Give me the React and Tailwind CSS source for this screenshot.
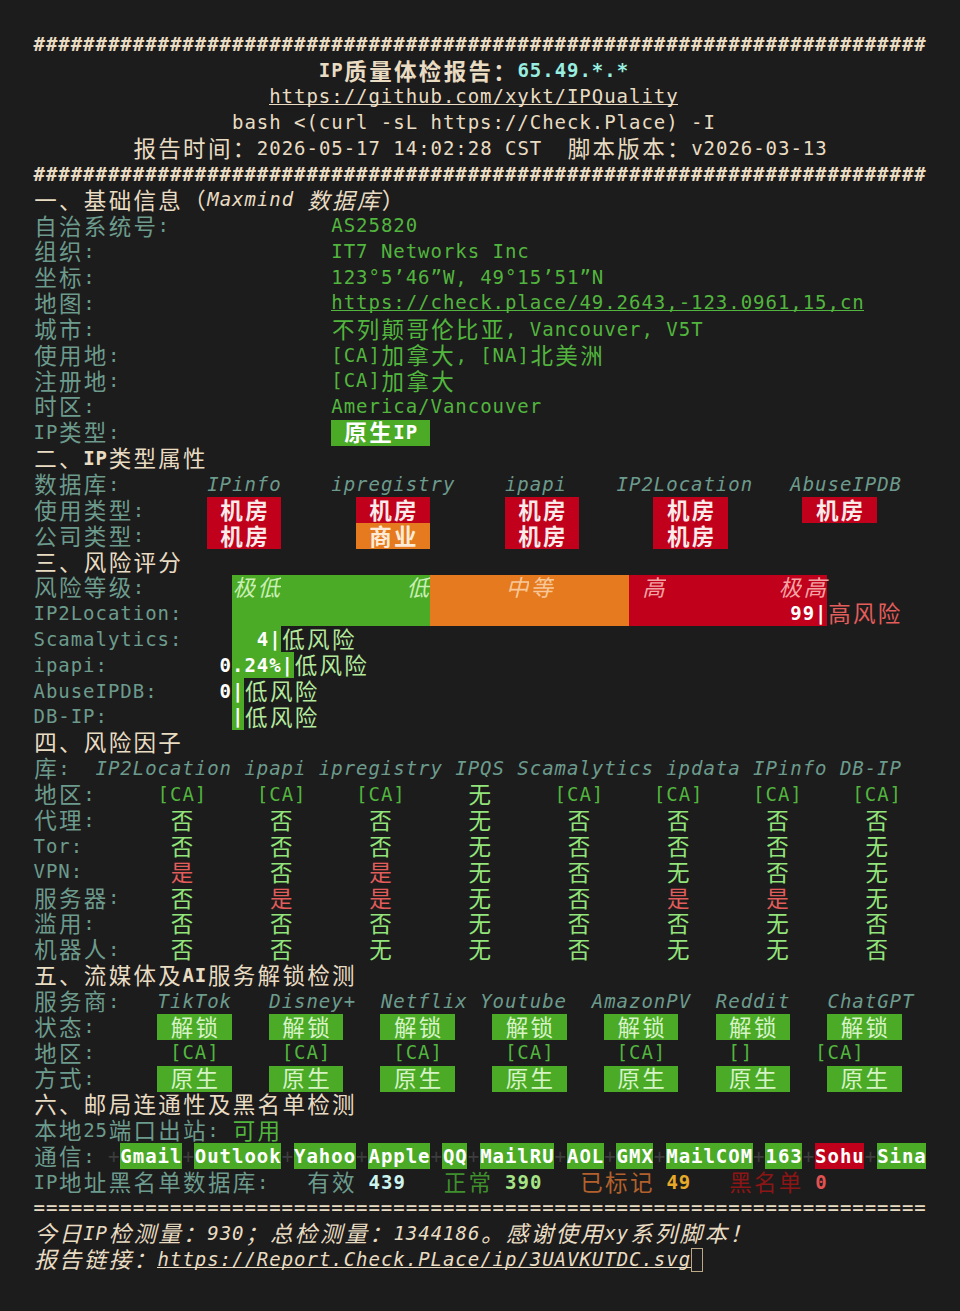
const CR = "text-[#e9dcc3]";
const LB = "text-[#6c9b8d]";
const GN = "text-[#52b53e]";
const LG = "text-[#93e47b]";
const RD = "text-[#e35d5b]";
const LOW = "text-[#b4e99c]";
const GB = "bg-[#4baa26] text-[#d6f3c6]";
const GBW = "bg-[#4baa26] text-white font-bold";
const RB = "bg-[#c1001b] text-[#fbeaea] font-bold";
const OB = "bg-[#e57a1f] text-[#fdebd8] font-bold";
const SEP = "text-[#3d3d3d]";

const NARROW =
  "flex h-full w-[12.42px] shrink-0 items-center justify-center whitespace-pre leading-none font-['DejaVu_Sans_Mono','Noto_Sans_CJK_SC',monospace] text-[19px]";
const WIDE =
  "flex h-full w-[24.84px] shrink-0 items-center justify-center whitespace-pre leading-none pb-[2px] font-['Noto_Sans_CJK_SC',sans-serif] text-[22.5px]";

const isWide = (ch) => {
  const c = ch.codePointAt(0);
  return (
    (c >= 0x2e80 && c <= 0xa4cf) ||
    (c >= 0xac00 && c <= 0xd7a3) ||
    (c >= 0xf900 && c <= 0xfaff) ||
    (c >= 0xfe30 && c <= 0xfe4f) ||
    (c >= 0xff00 && c <= 0xff60) ||
    (c >= 0xffe0 && c <= 0xffe6)
  );
};

const s = (t, c = "", col, u) => ({ t, c, col, u });

const Line = ({ segs, cursor }) => {
  const cells = [];
  let col = 0;
  segs.forEach((sg) => {
    if (sg.col != null) {
      while (col < sg.col) {
        cells.push({ ch: " ", w: 1, c: "" });
        col++;
      }
    }
    for (const ch of sg.t) {
      const w = isWide(ch) ? 2 : 1;
      cells.push({ ch, w, c: sg.c, u: sg.u });
      col += w;
    }
  });
  return (
    <div className="flex h-[25.85px]">
      {cells.map((x, i) => (
        <span key={i} className={`${x.w === 2 ? WIDE : NARROW} ${x.c}`}>
          {x.u ? (
            <span className="block w-full border-b-[1.5px] border-current text-center leading-[15px]">{x.ch}</span>
          ) : (
            x.ch
          )}
        </span>
      ))}
      {cursor && (
        <span className="flex h-full w-[12.42px] shrink-0 items-center">
          <span className="block h-[24px] w-[12px] border-[1.5px] border-[#bba985]" />
        </span>
      )}
    </div>
  );
};

const dbCols = [10, 18, 26, 34, 42, 50, 58, 66];
const factors = [
  ["代理:", "否否否无否否否否"],
  ["Tor:", "否否否无否否否无"],
  ["VPN:", "是否是无否无否无"],
  ["服务器:", "否是是无否是是无"],
  ["滥用:", "否否否无否否无否"],
  ["机器人:", "否否无无否无无否"],
];

const svcCols = [10, 19, 28, 37, 46, 55, 64];
const mails = ["Gmail", "Outlook", "Yahoo", "Apple", "QQ", "MailRU", "AOL", "GMX", "MailCOM", "163", "Sohu", "Sina"];

const lines = [
  [s("#".repeat(72), `${CR} font-bold`)],
  [s("IP质量体检报告：", `${CR} font-bold`, 23), s("65.49.*.*", "text-[#98efe0] font-bold")],
  [s("https://github.com/xykt/IPQuality", CR, 19, true)],
  [s("bash <(curl -sL https://Check.Place) -I", CR, 16)],
  [s("报告时间：2026-05-17 14:02:28 CST  脚本版本：v2026-03-13", CR, 8)],
  [s("#".repeat(72), `${CR} font-bold`)],
  [s("一、基础信息（", CR), s("Maxmind 数据库", `${CR} italic`), s("）", CR)],
  [s("自治系统号:", LB), s("AS25820", GN, 24)],
  [s("组织:", LB), s("IT7 Networks Inc", GN, 24)],
  [s("坐标:", LB), s("123°5’46”W, 49°15’51”N", GN, 24)],
  [s("地图:", LB), s("https://check.place/49.2643,-123.0961,15,cn", GN, 24, true)],
  [s("城市:", LB), s("不列颠哥伦比亚, Vancouver, V5T", GN, 24)],
  [s("使用地:", LB), s("[CA]加拿大, [NA]北美洲", GN, 24)],
  [s("注册地:", LB), s("[CA]加拿大", GN, 24)],
  [s("时区:", LB), s("America/Vancouver", GN, 24)],
  [s("IP类型:", LB), s(" 原生IP ", GBW, 24)],
  [s("二、", CR), s("IP", `${CR} font-bold`), s("类型属性", CR)],
  [
    s("数据库:", LB),
    s("IPinfo", `${LB} italic`, 14),
    s("ipregistry", `${LB} italic`, 24),
    s("ipapi", `${LB} italic`, 38),
    s("IP2Location", `${LB} italic`, 47),
    s("AbuseIPDB", `${LB} italic`, 61),
  ],
  [s("使用类型:", LB), s(" 机房 ", RB, 14), s(" 机房 ", RB, 26), s(" 机房 ", RB, 38), s(" 机房 ", RB, 50), s(" 机房 ", RB, 62)],
  [s("公司类型:", LB), s(" 机房 ", RB, 14), s(" 商业 ", OB, 26), s(" 机房 ", RB, 38), s(" 机房 ", RB, 50)],
  [s("三、风险评分", CR)],
  [
    s("风险等级:", LB),
    s("极低          低", "bg-[#4baa26] text-[#c9efb3] italic", 16),
    s("      中等      ", "bg-[#e57a1f] text-[#f8c898] italic"),
    s(" 高         极高", "bg-[#c1001b] text-[#f2a3a3] italic"),
  ],
  [
    s("IP2Location:", LB),
    s(" ".repeat(16), "bg-[#4baa26]", 16),
    s(" ".repeat(16), "bg-[#e57a1f]"),
    s(" ".repeat(13), "bg-[#c1001b]"),
    s("99|", "bg-[#c1001b] text-white font-bold"),
    s("高风险", RD),
  ],
  [s("Scamalytics:", LB), s("  4|", "bg-[#4baa26] text-white font-bold", 16), s("低风险", LOW)],
  [s("ipapi:", LB), s("0", "text-white font-bold", 15), s(".24%|", "bg-[#4baa26] text-white font-bold"), s("低风险", LOW)],
  [s("AbuseIPDB:", LB), s("0", "text-white font-bold", 15), s("|", "bg-[#4baa26] text-white font-bold"), s("低风险", LOW)],
  [s("DB-IP:", LB), s("|", "bg-[#4baa26] text-white font-bold", 16), s("低风险", LOW)],
  [s("四、风险因子", CR)],
  [s("库:", LB), s("IP2Location ipapi ipregistry IPQS Scamalytics ipdata IPinfo DB-IP", `${LB} italic`, 5)],
  [
    s("地区:", LB),
    ...["[CA]", "[CA]", "[CA]", "无", "[CA]", "[CA]", "[CA]", "[CA]"].map((v, i) =>
      v === "无" ? s(v, LG, dbCols[i] + 1) : s(v, GN, dbCols[i])
    ),
  ],
  ...factors.map(([label, vals]) => [
    s(label, LB),
    ...[...vals].map((v, i) => s(v, v === "是" ? RD : LG, dbCols[i] + 1)),
  ]),
  [s("五、流媒体及", CR), s("AI", `${CR} font-bold`), s("服务解锁检测", CR)],
  [
    s("服务商:", LB),
    s("TikTok", `${LB} italic`, 10),
    s("Disney+", `${LB} italic`, 19),
    s("Netflix", `${LB} italic`, 28),
    s("Youtube", `${LB} italic`, 36),
    s("AmazonPV", `${LB} italic`, 45),
    s("Reddit", `${LB} italic`, 55),
    s("ChatGPT", `${LB} italic`, 64),
  ],
  [s("状态:", LB), ...svcCols.map((c) => s(" 解锁 ", GB, c))],
  [
    s("地区:", LB),
    s("[CA]", GN, 11),
    s("[CA]", GN, 20),
    s("[CA]", GN, 29),
    s("[CA]", GN, 38),
    s("[CA]", GN, 47),
    s("[]", GN, 56),
    s("[CA]", GN, 63),
  ],
  [s("方式:", LB), ...svcCols.map((c) => s(" 原生 ", GB, c))],
  [s("六、邮局连通性及黑名单检测", CR)],
  [s("本地25端口出站:", LB), s("可用", GN, 16)],
  [
    s("通信:", LB),
    s("", "", 6),
    ...mails.flatMap((m) => [
      s("+", SEP),
      s(m, m === "Sohu" ? "bg-[#c1001b] text-white font-bold" : "bg-[#4baa26] text-white font-bold"),
    ]),
  ],
  [
    s("IP地址黑名单数据库:", LB),
    s("有效", LB, 22),
    s("439", "text-[#cdf4ee] font-bold", 27),
    s("正常", "text-[#3f8f2c]", 33),
    s("390", "text-[#a6e486] font-bold", 38),
    s("已标记", "text-[#b3612c]", 44),
    s("49", "text-[#e6a92a] font-bold", 51),
    s("黑名单", "text-[#8c1515]", 56),
    s("0", "text-[#e25252] font-bold", 63),
  ],
  [s("=".repeat(72), CR)],
  [s("今日IP检测量：930；总检测量：1344186。感谢使用xy系列脚本！", `${CR} italic`)],
  [s("报告链接：", `${CR} italic`), s("https://Report.Check.PLace/ip/3UAVKUTDC.svg", `${CR} italic`, 10, true)],
];

export default function App() {
  return (
    <div className="min-h-screen bg-[#1c1c1c] pl-[33px] pt-[32px]">
      {lines.map((segs, i) => (
        <Line key={i} segs={segs} cursor={i === lines.length - 1} />
      ))}
    </div>
  );
}
